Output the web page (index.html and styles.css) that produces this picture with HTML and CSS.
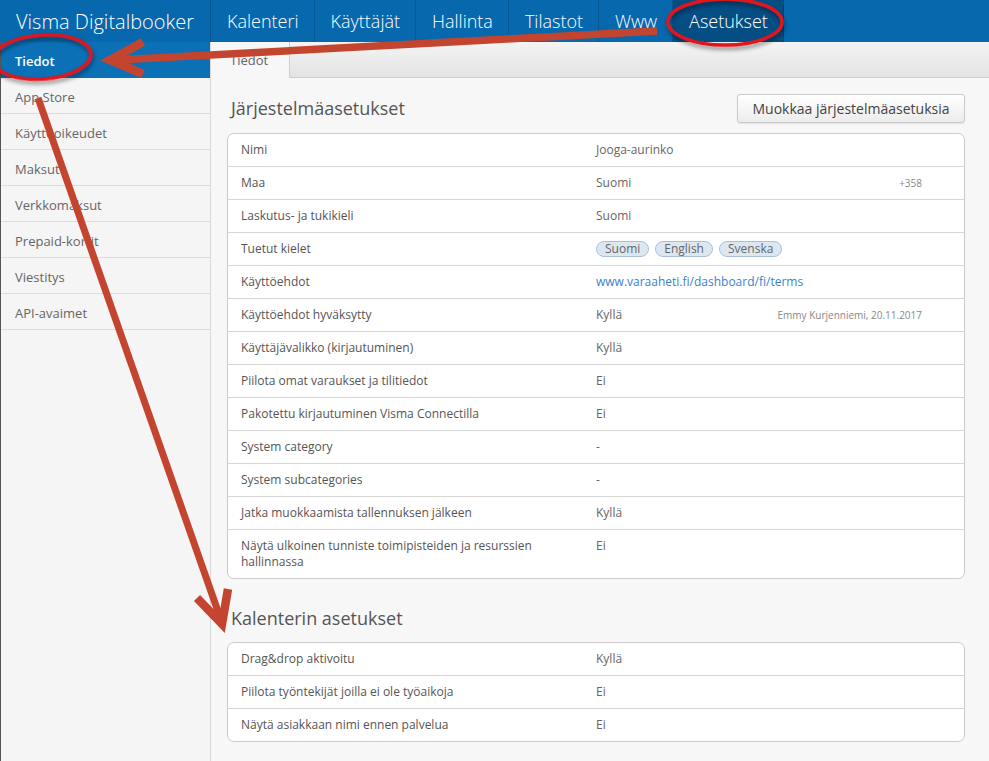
FILE: index.html
```html
<!DOCTYPE html>
<html lang="fi">
<head>
<meta charset="utf-8">
<title>Visma Digitalbooker – Asetukset</title>
<link rel="stylesheet" href="styles.css">
</head>
<body>
<header class="topnav">
  <div class="brand">Visma Digitalbooker</div>
  <nav class="navitems">
    <a class="navitem">Kalenteri</a>
    <a class="navitem">Käyttäjät</a>
    <a class="navitem">Hallinta</a>
    <a class="navitem">Tilastot</a>
    <a class="navitem">Www</a>
    <a class="navitem active">Asetukset</a>
  </nav>
</header>
<div class="layout">
  <aside class="sidebar">
    <a class="sideitem active">Tiedot</a>
    <a class="sideitem">App Store</a>
    <a class="sideitem">Käyttöoikeudet</a>
    <a class="sideitem">Maksut</a>
    <a class="sideitem">Verkkomaksut</a>
    <a class="sideitem">Prepaid-kortit</a>
    <a class="sideitem">Viestitys</a>
    <a class="sideitem">API-avaimet</a>
  </aside>
  <main class="main">
    <div class="tabbar">
      <div class="tab active">Tiedot</div>
    </div>
    <div class="content">
      <div class="sectionhead">
        <h2 class="title">Järjestelmäasetukset</h2>
        <button class="btn">Muokkaa järjestelmäasetuksia</button>
      </div>
      <div class="table">
        <div class="row"><div class="label">Nimi</div><div class="value">Jooga-aurinko</div><div class="note"></div></div>
        <div class="row"><div class="label">Maa</div><div class="value">Suomi</div><div class="note">+358</div></div>
        <div class="row"><div class="label">Laskutus- ja tukikieli</div><div class="value">Suomi</div><div class="note"></div></div>
        <div class="row"><div class="label">Tuetut kielet</div><div class="value pills"><span class="pill">Suomi</span><span class="pill">English</span><span class="pill">Svenska</span></div><div class="note"></div></div>
        <div class="row"><div class="label">Käyttöehdot</div><div class="value"><a class="link">www.varaaheti.fi/dashboard/fi/terms</a></div><div class="note"></div></div>
        <div class="row"><div class="label">Käyttöehdot hyväksytty</div><div class="value">Kyllä</div><div class="note">Emmy Kurjenniemi, 20.11.2017</div></div>
        <div class="row"><div class="label">Käyttäjävalikko (kirjautuminen)</div><div class="value">Kyllä</div><div class="note"></div></div>
        <div class="row"><div class="label">Piilota omat varaukset ja tilitiedot</div><div class="value">Ei</div><div class="note"></div></div>
        <div class="row"><div class="label">Pakotettu kirjautuminen Visma Connectilla</div><div class="value">Ei</div><div class="note"></div></div>
        <div class="row"><div class="label">System category</div><div class="value">-</div><div class="note"></div></div>
        <div class="row"><div class="label">System subcategories</div><div class="value">-</div><div class="note"></div></div>
        <div class="row"><div class="label">Jatka muokkaamista tallennuksen jälkeen</div><div class="value">Kyllä</div><div class="note"></div></div>
        <div class="row"><div class="label">Näytä ulkoinen tunniste toimipisteiden ja resurssien hallinnassa</div><div class="value">Ei</div><div class="note"></div></div>
      </div>
      <div class="sectionhead second">
        <h2 class="title">Kalenterin asetukset</h2>
      </div>
      <div class="table">
        <div class="row"><div class="label">Drag&amp;drop aktivoitu</div><div class="value">Kyllä</div><div class="note"></div></div>
        <div class="row"><div class="label">Piilota työntekijät joilla ei ole työaikoja</div><div class="value">Ei</div><div class="note"></div></div>
        <div class="row"><div class="label">Näytä asiakkaan nimi ennen palvelua</div><div class="value">Ei</div><div class="note"></div></div>
      </div>
    </div>
  </main>
</div>
<svg class="annotations" width="989" height="761" viewBox="0 0 989 761" aria-hidden="true">
  <defs>
    <filter id="sh" x="-20%" y="-40%" width="140%" height="180%">
      <feDropShadow dx="1" dy="3" stdDeviation="2" flood-color="#000" flood-opacity="0.45"/>
    </filter>
  </defs>
  <g fill="none" stroke="#e0161b" stroke-width="3.5" filter="url(#sh)">
    <ellipse cx="725" cy="22" rx="57" ry="23"/>
    <ellipse cx="42" cy="57" rx="49" ry="22" transform="rotate(-4 42 57)"/>
  </g>
  <g stroke="#c4452f" stroke-linecap="butt" fill="none">
    <line x1="657" y1="31" x2="116" y2="60" stroke-width="7.5"/>
    <polyline points="143,42 110,60 143,74" stroke-width="8.5" stroke-linejoin="miter"/>
    <line x1="38" y1="98" x2="221" y2="620" stroke-width="7"/>
    <polyline points="197,598 222,624 228,589" stroke-width="8.5" stroke-linejoin="miter"/>
  </g>
</svg>
</body>
</html>
```
FILE: styles.css
```css
* { box-sizing: border-box; }
html, body { margin: 0; padding: 0; }
body {
  font-family: "Open Sans", "Liberation Sans", sans-serif;
  color: #555;
  background: #f7f7f7;
  width: 989px;
  height: 761px;
  overflow: hidden;
  position: relative;
}
a { text-decoration: none; color: inherit; }

.topnav {
  height: 42px;
  background: #0768ad;
  display: flex;
  align-items: stretch;
}
.brand {
  width: 211px;
  padding-left: 16px;
  font-size: 20px;
  font-weight: 300;
  color: #fff;
  display: flex;
  align-items: center;
  border-right: 1px solid rgba(0, 0, 0, 0.18);
}
.navitems { display: flex; }
.navitem {
  padding: 0 15px 0 16px;
  font-size: 18px;
  font-weight: 300;
  color: #fff;
  display: flex;
  align-items: center;
  border-right: 1px solid rgba(0, 0, 0, 0.15);
}
.navitem.active { background: #054e84; }

.layout {
  display: flex;
  height: 719px;
}
.sidebar {
  width: 211px;
  flex: none;
  background: #f5f5f5;
  border-right: 1px solid #d8d8d8;
  border-left: 1px solid #555;
}
.sideitem {
  display: flex;
  align-items: center;
  height: 36px;
  padding: 2px 0 0 14px;
  font-size: 13px;
  color: #666;
  border-bottom: 1px solid #dcdcdc;
}
.sideitem.active {
  background: #0c70b6;
  color: #fff;
  font-weight: 600;
  border-bottom-color: #0c70b6;
}

.main {
  flex: 1;
  display: flex;
  flex-direction: column;
  background: #f7f7f7;
}
.tabbar {
  height: 36px;
  background: linear-gradient(#f4f4f4, #e3e3e3);
  border-bottom: 1px solid #cfcfcf;
  display: flex;
}
.tab {
  width: 79px;
  padding-left: 19px;
  font-size: 13px;
  color: #666;
  display: flex;
  align-items: center;
  border-right: 1px solid #cfcfcf;
}
.tab.active {
  background: #f7f7f7;
  height: 36px;
  margin-bottom: -1px;
}

.content {
  padding: 15px 24px 0 16px;
}
.sectionhead {
  display: flex;
  align-items: center;
  justify-content: space-between;
  height: 30px;
  margin-bottom: 10px;
}
.sectionhead.second {
  margin-top: 25px;
  height: 28px;
  margin-bottom: 10px;
}
.title {
  margin: 0;
  padding-left: 4px;
  font-size: 18px;
  font-weight: 400;
  color: #555;
}
.btn {
  font-family: inherit;
  font-size: 14px;
  color: #444;
  height: 29px;
  width: 228px;
  background: linear-gradient(#ffffff, #ececec);
  border: 1px solid #c9c9c9;
  border-radius: 3px;
  box-shadow: 0 1px 1px rgba(0, 0, 0, 0.08);
  padding: 0;
}

.table {
  background: #fff;
  border: 1px solid #cbcbcb;
  border-radius: 7px;
  overflow: hidden;
}
.row {
  display: grid;
  grid-template-columns: 368px 1fr auto;
  font-size: 12px;
  line-height: 16px;
  border-bottom: 1px solid #d6d6d6;
}
.row:last-child { border-bottom: none; }
.label {
  padding: 8px 20px 8px 13px;
  color: #555;
}
.value {
  padding: 8px 0;
  color: #666;
}
.note {
  padding: 8px 42px 8px 0;
  font-size: 10px;
  color: #888;
}
.pills { display: flex; gap: 6px; align-items: center; padding: 0; }
.pill {
  display: inline-block;
  border: 1px solid #a9bfd8;
  background: #dde7f2;
  color: #666;
  border-radius: 8px;
  padding: 0 8px;
  line-height: 14px;
  font-size: 12px;
}
.link { color: #3b7fcf; }

.annotations {
  position: absolute;
  top: 0;
  left: 0;
  pointer-events: none;
}
```
